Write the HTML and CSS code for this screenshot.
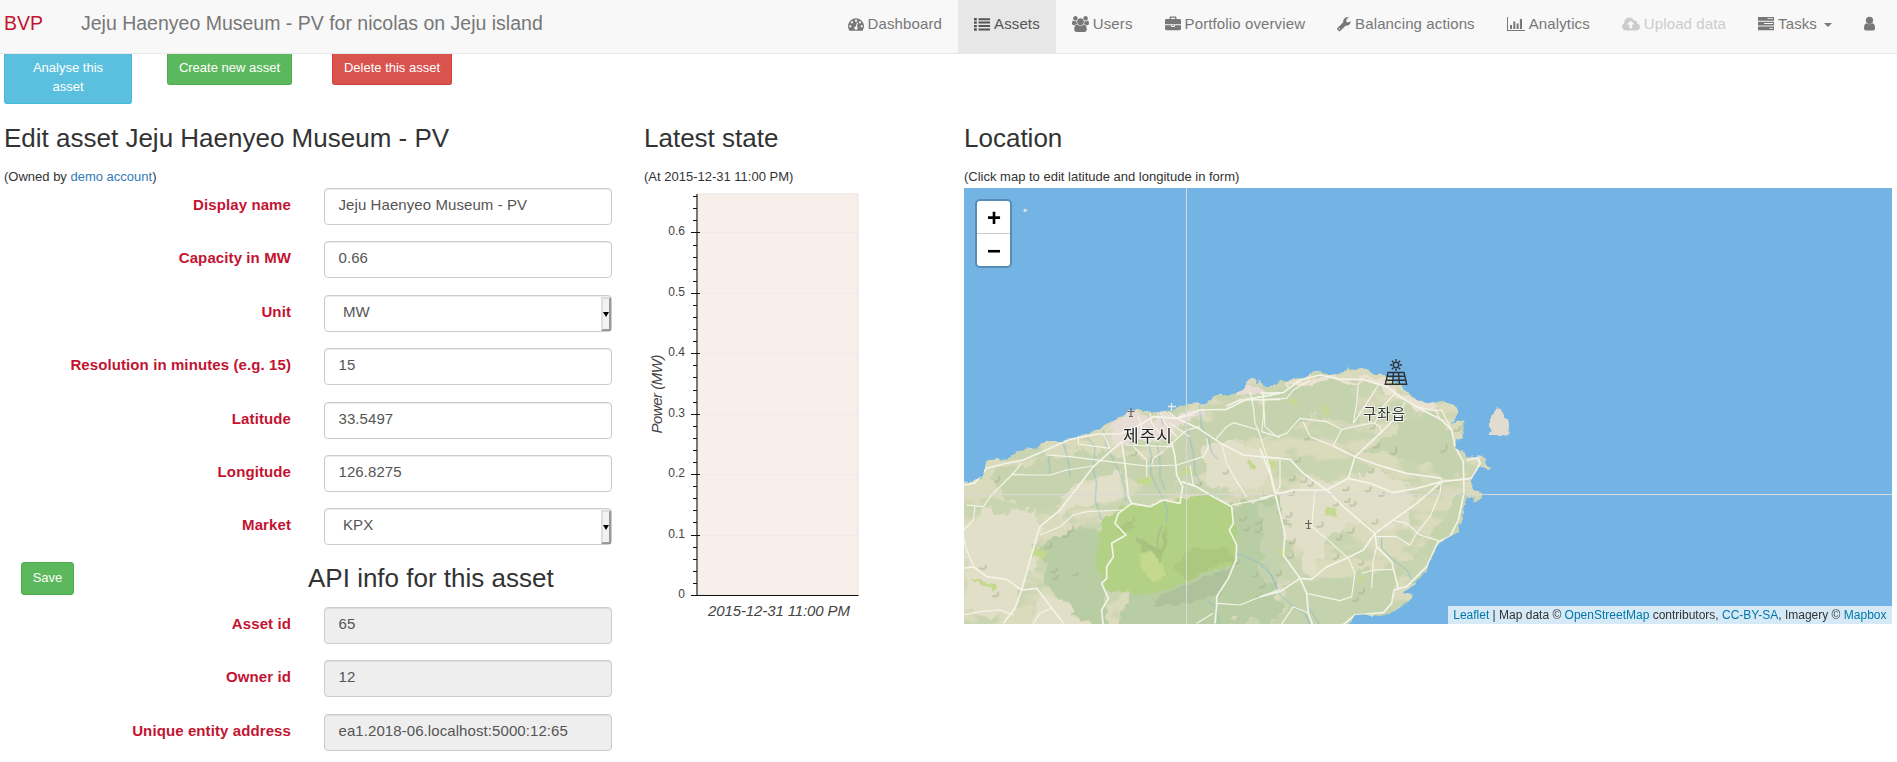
FILE: index.html
```html
<!DOCTYPE html>
<html lang="en">
<head>
<meta charset="utf-8">
<title>Jeju Haenyeo Museum - PV</title>
<link rel="stylesheet" href="styles.css">
</head>
<body>
<header class="navbar">
  <a class="brand">BVP</a>
  <span class="page-title">Jeju Haenyeo Museum - PV for nicolas on Jeju island</span>
  <nav class="menu">
    <a class="item"><svg class="icon" viewBox="0 0 1792 1792"><path d="M384 1152q0-53-37.500-90.500t-90.500-37.500-90.500 37.500-37.500 90.500 37.500 90.500 90.500 37.500 90.500-37.500 37.500-90.500zm192-448q0-53-37.500-90.500t-90.500-37.500-90.500 37.500-37.500 90.500 37.500 90.500 90.500 37.500 90.500-37.500 37.500-90.500zm428 481l101-382q6-26-7.500-48.500t-38.500-29.500-48 6.500-30 39.500l-101 382q-60 5-107 43.500t-63 98.500q-20 77 20 146t117 89 146-20 89-117q16-60-6-117t-72-91zm660-33q0-53-37.500-90.500t-90.500-37.500-90.500 37.500-37.500 90.500 37.500 90.500 90.500 37.500 90.500-37.500 37.500-90.500zm-640-640q0-53-37.500-90.500t-90.500-37.500-90.500 37.500-37.500 90.500 37.500 90.500 90.500 37.500 90.500-37.500 37.500-90.500zm448 192q0-53-37.500-90.500t-90.500-37.500-90.500 37.500-37.500 90.500 37.500 90.500 90.500 37.500 90.500-37.500 37.500-90.500zm320 448q0 261-141 483-19 29-54 29h-1402q-35 0-54-29-141-221-141-483 0-182 71-348t191-286 286-191 348-71 348 71 286 191 191 286 71 348z"/></svg><span>Dashboard</span></a>
    <a class="item active"><svg class="icon" viewBox="0 0 16 16"><path d="M0 2h2.800v2.400H0zM0 5.400h2.800v2.400H0zM0 8.900h2.800v2.400H0zM0 12.300h2.800v2.400H0zM4.500 2.200H16v2H4.500zM4.500 5.600H16v2H4.500zM4.500 9.100H16v2H4.500zM4.500 12.500H16v2H4.500z"/></svg><span>Assets</span></a>
    <a class="item"><svg class="icon icon-users" viewBox="-64 0 1920 1792"><path d="M529 896q-162 5-265 128h-134q-82 0-138-40.500t-56-118.500q0-353 124-353 6 0 43.500 21t97.500 42.500 119 21.500q67 0 133-23-5 37-5 66 0 139 81 256zm1071 637q0 120-73 189.500t-194 69.500h-874q-121 0-194-69.500t-73-189.500q0-53 3.500-103.500t14-109 26.500-108.500 43-97.500 62-81 85.500-53.500 111.500-20q10 0 43 21.500t73 48 107 48 135 21.500 135-21.500 107-48 73-48 43-21.500q61 0 111.500 20t85.500 53.500 62 81 43 97.500 26.500 108.500 14 109 3.500 103.500zm-1024-1277q0 106-75 181t-181 75-181-75-75-181 75-181 181-75 181 75 75 181zm704 384q0 159-112.500 271.500t-271.500 112.500-271.500-112.500-112.500-271.500 112.500-271.500 271.500-112.500 271.500 112.500 112.500 271.500zm576 225q0 78-56 118.500t-138 40.500h-134q-103-123-265-128 81-117 81-256 0-29-5-66 66 23 133 23 59 0 119-21.500t97.500-42.500 43.500-21q124 0 124 353zm-128-609q0 106-75 181t-181 75-181-75-75-181 75-181 181-75 181 75 75 181z"/></svg><span>Users</span></a>
    <a class="item"><svg class="icon" viewBox="0 0 16 16"><path fill-rule="evenodd" d="M4.600 3V1.300Q4.600.4 5.500.4h5q.9 0 .9.900V3h3.200Q16 3 16 4.400v3.800H0V4.400Q0 3 1.400 3zM5.900 3h4.200V1.700H5.900zM0 9.200h6v1q0 .8.800.8h2.400q.8 0 .8-.8v-1h6v3.600q0 1.400-1.400 1.400H1.400Q0 14.200 0 12.800zM7 9.200h2v.9H7z"/></svg><span>Portfolio overview</span></a>
    <a class="item"><svg class="icon icon-wrench" viewBox="0 0 15 16"><path fill-rule="evenodd" d="M.5 12.400 6.700 6.200Q6.200 4 7.700 2.300 9.700.2 12.700 1L10 3.300v2.200l1.800 1L14.600 5q.1 2.500-1.600 3.900-1.500 1.200-3.600.8l-6 5.700q-.8.700-1.600 0L.5 14.200q-.8-.9 0-1.800zM2.500 12.500a.7.700 0 1 0 .1 1.400.7.700 0 0 0-.1-1.400z"/></svg><span>Balancing actions</span></a>
    <a class="item"><svg class="icon icon-chart" viewBox="0 0 18 16"><path d="M0 1h1v13h17v1H0zM3 9h2v4H3zM6.300 5.500h2V13h-2zM9.600 7.500h2V13h-2zM12.900 3H15v10h-2.100z"/></svg><span>Analytics</span></a>
    <a class="item disabled"><svg class="icon icon-cloud" viewBox="0 0 18 16"><path fill-rule="evenodd" d="M4 14.500Q0 14 0 10.500 0 8 2.300 7 2 2 7 1.500q3.500-.1 4.800 3.100Q15 4 15 7.400q3 .6 3 3.700-.2 3-3.500 3.400zM8.700 4.700 4.900 8.500h2.400v3.800h2.900V8.500h2.500z"/></svg><span>Upload data</span></a>
    <a class="item"><svg class="icon" viewBox="0 0 16 16"><path fill-rule="evenodd" d="M0 1h16v3.700H0zM9.500 2.300v.8H15v-.8zM0 5.700h16v3.700H0zM6 7.100v.8h9v-.8zM0 10.500h16v3.800H0zM11.500 12v.8H15V12z"/></svg><span>Tasks</span><i class="caret"></i></a>
    <a class="item"><svg class="icon icon-user" viewBox="0 0 11 16"><circle cx="5.500" cy="4.300" r="3.600"/><path d="M2.500 7.200Q5.500 9.500 8.500 7.200 11 7.600 11 12.500q0 2-2 2H2q-2 0-2-2 0-4.900 2.500-5.300z"/></svg></a>
  </nav>
</header>

<main class="page">
  <section class="col-form">
    <div class="actions">
      <a class="btn info">Analyse this asset</a>
      <a class="btn success">Create new asset</a>
      <a class="btn danger">Delete this asset</a>
    </div>
    <h3 class="heading">Edit asset Jeju Haenyeo Museum - PV</h3>
    <small class="note">(Owned by <a class="link">demo account</a>)</small>
    <form class="form">
      <label class="row"><span class="label">Display name</span><span class="control">Jeju Haenyeo Museum - PV</span></label>
      <label class="row"><span class="label">Capacity in MW</span><span class="control">0.66</span></label>
      <label class="row"><span class="label">Unit</span><span class="control select">MW<i class="arrow"></i></span></label>
      <label class="row"><span class="label">Resolution in minutes (e.g. 15)</span><span class="control">15</span></label>
      <label class="row"><span class="label">Latitude</span><span class="control">33.5497</span></label>
      <label class="row"><span class="label">Longitude</span><span class="control">126.8275</span></label>
      <label class="row"><span class="label">Market</span><span class="control select">KPX<i class="arrow"></i></span></label>
      <div class="save-row"><a class="btn success save">Save</a><h3 class="heading api">API info for this asset</h3></div>
      <label class="row"><span class="label">Asset id</span><span class="control readonly">65</span></label>
      <label class="row"><span class="label">Owner id</span><span class="control readonly">12</span></label>
      <label class="row"><span class="label">Unique entity address</span><span class="control readonly">ea1.2018-06.localhost:5000:12:65</span></label>
    </form>
  </section>

  <section class="col-state">
    <h3 class="heading">Latest state</h3>
    <small class="note">(At 2015-12-31 11:00 PM)</small>
    <svg class="chart" width="230" height="436" viewBox="644 188 230 436">
      <rect x="697.500" y="194" width="160.500" height="401" fill="#f8efeb" stroke="#e9e1df"/>
      <path d="M698 232.500h160M698 293.500h160M698 353.500h160M698 414.500h160M698 474.500h160M698 535.500h160" stroke="#f2eae8"/>
      <path d="M697 194v402" stroke="#777" stroke-width="2"/>
      <path d="M691 232.500h9M691 293.500h9M691 353.500h9M691 414.500h9M691 474.500h9M691 535.500h9M691 595.500h167.500" stroke="#111"/>
      <path d="M693 196.500h4M693 208.500h4M693 220.500h4M693 245.500h4M693 257.500h4M693 269.500h4M693 281.500h4M693 305.500h4M693 317.500h4M693 329.500h4M693 341.500h4M693 365.500h4M693 377.500h4M693 390.500h4M693 402.500h4M693 426.500h4M693 438.500h4M693 450.500h4M693 462.500h4M693 486.500h4M693 498.500h4M693 510.500h4M693 522.500h4M693 547.500h4M693 559.500h4M693 571.500h4M693 583.500h4" stroke="#111"/>
      <g class="tick-labels" text-anchor="end">
        <text x="685" y="235">0.6</text><text x="685" y="296">0.5</text><text x="685" y="356">0.4</text><text x="685" y="417">0.3</text><text x="685" y="477">0.2</text><text x="685" y="538">0.1</text><text x="685" y="598">0</text>
      </g>
      <text class="axis-label" x="708" y="616" textLength="142">2015-12-31 11:00 PM</text>
      <text class="axis-label" transform="translate(662 433.500) rotate(-90)" textLength="79">Power (MW)</text>
    </svg>
  </section>

  <section class="col-map">
    <h3 class="heading">Location</h3>
    <small class="note">(Click map to edit latitude and longitude in form)</small>
    <div class="map">
      <svg class="tiles" viewBox="964 188 928 436">
        <defs>
          <filter id="rough" x="-5%" y="-5%" width="110%" height="110%"><feTurbulence type="fractalNoise" baseFrequency=".12" numOctaves="3" seed="4"/><feDisplacementMap in="SourceGraphic" scale="7" xChannelSelector="R" yChannelSelector="G"/></filter>
          <filter id="terrain" x="-10%" y="-10%" width="120%" height="120%"><feTurbulence type="fractalNoise" baseFrequency=".05" numOctaves="4" seed="9"/><feDisplacementMap in="SourceGraphic" scale="26" xChannelSelector="R" yChannelSelector="G"/><feGaussianBlur stdDeviation=".5"/></filter>
          <filter id="mottle" x="0" y="0" width="100%" height="100%" color-interpolation-filters="sRGB"><feTurbulence type="fractalNoise" baseFrequency=".025 .05" numOctaves="3" seed="21"/><feColorMatrix values="0 0 0 0 .75  0 0 0 0 .82  0 0 0 0 .66  9 0 0 0 -4.200"/></filter>
          <clipPath id="land">
            <path id="west" transform="translate(960 360) scale(.33333)" d="M0 373 12 368 40 364 70 345 78 300 95 300 110 297 140 300 160 285 185 270 215 268 245 255 255 240 275 245 300 248 340 232 375 222 415 210 450 185 490 172 505 150 525 152 560 160 600 155 640 148 680 133 715 130 740 130 765 105 810 105 850 90 865 65 880 52 895 72 910 80V820H0z"/>
            <path id="east" transform="translate(1260 340) scale(.33333)" d="M-8 130 0 122 20 142 45 138 60 120 85 128 130 110 175 95 210 105 255 100 262 85 290 92 310 86 345 105 375 105 420 135 440 155 470 180 500 190 540 183 570 188 595 210 585 230 568 254 590 240 613 245 610 295 590 300 585 325 610 335 620 350 650 355 660 343 670 345 672 370 690 385 680 392 660 375 640 400 635 420 640 450 660 455 665 475 650 487 635 470 620 470 610 500 605 540 595 555 598 575 560 595 535 610 510 660 500 690 480 715 450 740 432 762 460 770 440 790 400 815 360 828 320 822 285 825 262 856H-8z"/>
          </clipPath>
        </defs>
        <rect x="964" y="188" width="928" height="436" fill="#73b4e5"/>
        <g filter="url(#rough)" fill="#dadabd">
          <use href="#west"/><use href="#east"/>
          <path fill="#e2dbd0" transform="translate(1260 340) scale(.33333)" d="M700 215 710 198 722 210 730 225 745 245 750 265 742 292 720 285 690 285 686 245z"/>
          <circle cx="1024.500" cy="211" r="2.200" fill="#dfe3dc"/>
        </g>
        <g clip-path="url(#land)">
          <rect x="964" y="360" width="520" height="264" filter="url(#mottle)" opacity=".6"/>
          <g filter="url(#terrain)">
            <g transform="translate(960 360) scale(.33333)">
              <path fill="#c6d3ae" d="M90 350 200 300 340 285 470 290 600 290 680 200 790 150 920 110V230L820 240 740 320 660 370 560 390 470 350 400 340 300 430 240 470 140 420z"/>
              <path fill="#e2dfc8" d="M10 480 200 440 240 500 220 600 190 700 150 770 20 760zM390 360 470 335 500 390 460 430 360 440 290 480 330 400zM240 700 360 740 420 810 200 820zM740 260 860 250 930 300 920 390 800 390 740 340z"/>
              <path fill="#e8ddd5" d="M440 200 510 155 620 165 690 160 720 140 745 150 660 205 600 235 450 245zM820 100 870 80 930 90 880 110z"/>
              <path fill="#b9cda4" d="M250 570 310 500 440 500 440 700 450 840H420L280 700zM810 430 980 410V560L950 650 960 780 800 790 700 840H450L520 700 830 600z"/>
            </g>
            <g transform="translate(1260 340) scale(.33333)">
              <path fill="#c4d2ad" d="M10 170 130 130 270 130 300 240 180 240 50 280 0 260zM340 320 440 230 540 230 600 330 600 410 530 400 400 350 290 330zM0 490 50 500 90 580 80 700 10 740zM80 760 160 720 290 700 410 690 400 850 40 870z"/>
              <path fill="#e2dfc9" d="M60 470 150 420 290 430 410 430 480 470 440 530 350 560 260 540 200 600 160 700 110 640 80 570zM290 390 380 400 450 440 300 430z"/>
              <path fill="#eae1d1" d="M80 130 180 105 290 120 370 110 430 150 520 200 560 250 470 210 350 130 200 130 90 160z"/>
              <path fill="#c6d4ae" d="M480 640 540 560 620 420 600 560 500 700z"/>
            </g>
          </g>
          <g filter="url(#rough)">
            <path transform="translate(960 360) scale(.33333)" fill="#b3d185" d="M425 480 490 440 560 432 640 420 690 410 750 405 812 435 830 500 828 590 820 620 740 635 650 680 560 705 440 690 410 620z"/>
            <g transform="translate(960 360) scale(.33333)" fill="#c4d98e">
              <path d="M535 350 575 350 570 375 535 370zM220 560 260 580 250 600 215 585zM540 580 590 570 620 650 580 665 545 630zM665 325 700 330 695 350 665 345zM870 300 890 320 880 330 860 310zM30 655 110 675 100 690 50 670z"/>
              <path fill="#a3c077" d="M530 535 570 555 600 570 615 500 625 540 600 610 575 570 545 570z" opacity=".8"/>
              <path fill="#a9c57c" d="M640 620 700 560 760 570 800 560 830 600 740 630 680 665zM470 510 500 480 525 500 500 520z" opacity=".8"/>
              <path fill="#a9bd97" d="M640 690 740 650 820 620 780 700 690 730 580 740 600 705z" opacity=".75"/>
            </g>
            <g transform="translate(1260 340) scale(.33333)" fill="#c5da90"><path d="M85 175 115 178 110 195 85 192zM185 195 215 210 200 235zM200 500 230 505 232 530 195 525zM30 355 52 365 35 400zM55 625 75 630 68 650zM295 710 320 718 300 727z"/></g>
          </g>
          <g transform="translate(960 360) scale(.33333)" class="streams"><path d="M265 285 270 340M310 250 325 300 330 350M380 230 405 260 400 330 410 370 405 420 425 480M430 210 440 260 480 340 495 380 497 425M565 250 575 290 572 340 590 380 610 415 622 450 618 490M590 250 600 300 600 350 615 390M680 200 700 280 705 340 725 375M718 135 725 200 745 230 755 280 775 298M830 580 880 600 920 620 940 660 960 700M740 720 765 740 780 790M620 120 600 160 610 195"/></g>
          <g transform="translate(1260 340) scale(.33333)" class="streams"><path d="M0 675 35 705 55 760 100 800 135 820 150 856M145 800 180 856M365 590 365 625 400 660 440 690 465 735"/></g>
          <g class="hills" transform="translate(960 360) scale(.33333)"><path d="M105 365q15 0 12-14M255 562q20 6 20-12M310 530q18 5 18-14M325 515q16 0 15-15M60 625q18 6 18-8M100 708q16 4 14-10M505 490q18 0 16-14M515 285q14 4 14-8M275 635q16 4 16-8M280 655q14 4 14-8M840 480q18 5 18-10M850 510q16 5 16-8M885 515q18 3 18-12M890 490q16 3 16-10M530 535q30 5 50 40M605 500q-20 40-10 75M340 645q14 4 14-8M790 340q14 4 14-8M710 375q14 4 14-8M890 710q14 4 14-8M880 650q14 0 12-10M820 610q16 6 16-8"/></g>
          <g class="hills" transform="translate(1260 340) scale(.33333)"><path d="M135 298q12 4 12-8M342 322q15 4 14-10M395 342q16 4 14-18M545 335q16 0 14-18M583 272q16 4 16-10M108 364q12 4 12-8M90 420q14 4 14-12M125 425q14 4 14-10M145 437q14 4 14-10M328 397q14 4 12-10M250 450q16 4 16-8M318 453q14 4 14-10M358 467q14 4 14-8M255 485q14 4 14-8M272 496q15 4 14-10M222 496q14 4 12-10M80 530q16 4 14-12M88 464q16 4 14-10M90 609q16 4 14-12M82 653q18 4 18-12M172 560q18 4 16-12M230 598q14 4 14-12M265 578q16 4 16-12M338 550q16 4 14-10M222 657q14 0 12-12M298 673q12 4 12-8M298 760q14 4 14-12M280 783q14 4 14-10M50 705q16 4 12-12M0 742q14 4 14-12M532 445q12 0 10-10M332 265q12 4 12-8"/></g>
          <g class="roads" transform="translate(960 360) scale(.33333)">
            <path class="wide" d="M10 376 45 368 80 325 130 312 190 300 270 265 330 238 415 222 480 222 530 200 580 170 650 175 715 205 780 248 850 285 960 295M10 625 40 620 80 650 140 658 185 690 230 530 240 500 300 450 400 320 485 245M185 690 165 745 130 790M185 690 230 685 310 790M485 245 495 310 505 410 515 430 475 460 465 490 498 525 455 550 460 590 440 620 440 655 425 670 445 715 425 750 430 800M515 430 570 440 610 420 660 430 668 380 650 345 645 290 635 245M665 365 710 380 760 410 815 440 820 490 808 510 830 555 828 600 805 655 770 710 770 735 765 790M650 175 720 150 800 148 860 118 960 100M800 138 840 120 960 118"/>
            <path d="M185 310 155 345 95 405 70 440 20 435M155 343 210 345 270 345 320 330 400 318M260 285 330 290 450 305 560 318 650 315 730 290 745 262 740 235M240 525 300 500 340 465 380 455 490 450M45 440 40 480 10 510M10 530 20 570 40 615M10 765 60 755 120 750 160 765M220 790 240 760 275 745M355 222 355 252 450 265M430 222 450 265M500 255 635 260M535 170 545 200 540 230M570 155 575 190 600 220 630 245M600 155 615 190 650 230M625 155 650 175 700 165M630 190 690 230M520 260 560 300 560 350M610 275 580 295 575 315M690 315 700 378M785 250 800 310 830 365 860 410M815 435 920 415 960 395M870 95 880 140 885 190 895 210 920 290 945 390 960 460M910 100 910 170 905 215 960 232M765 240 800 200 820 188 895 210M620 265 680 210 720 200M770 730 840 735 890 715 960 688M710 790 760 760"/>
          </g>
          <g class="roads" transform="translate(1260 340) scale(.33333)">
            <path class="wide" d="M0 160 70 158 120 120 180 105 240 118 310 118 380 140 420 170 470 200 545 240 575 270 585 320 610 365 612 460 595 540 570 590 535 605 500 680 440 740 402 750 395 790 370 818 285 825 230 870M0 350 90 358 130 400 200 450 250 500 320 560 345 580 350 620 395 665 415 745M0 325 30 400 45 460 75 580 70 645 120 715 140 760 145 820 160 860M200 450 265 415 285 350 350 290 400 240M0 475 60 460 100 450 200 450M220 318 285 350 370 380 440 400 545 415M265 415 330 430 400 458 470 445 545 425 635 415 660 370 650 355 620 360M0 770 60 755 120 715 155 718 200 680 260 655 310 630 345 580 400 540 470 490 545 425"/>
            <path d="M0 180 80 175 100 150 150 120M10 165 15 260 50 290 80 280 120 235 200 245 245 268 340 248 360 260 365 280M295 130 290 190 280 250M355 135 320 190 280 250M405 160 360 210 345 250M245 268 220 318M220 318 150 290 130 245M545 415 540 460 510 530 470 580 450 615 410 590 350 590M395 540 440 550 480 585 535 602M165 450 155 560 210 605 265 655 285 700 275 770 240 782 140 760M60 860 100 800 145 820M350 620 340 660 335 745M305 700 340 690 400 688M60 360 60 440 45 460M435 185 420 220 400 240M470 200 520 212 545 210 575 270"/>
          </g>
        </g>
        <path transform="translate(1260 340) scale(.33333)" fill="none" stroke="#f1eee5" stroke-width="4" d="M610 420 635 413 662 370 655 352 635 356"/>
        <path d="M1186.500 188v436" stroke="#d9d9dc"/><path d="M964 494.500h928" stroke="#d9d9dc"/>
        <g fill="none" stroke="#68645c" stroke-width="1.200"><path id="plane" d="M1131 408v9M1127.500 411.500h7M1129 416.500h4"/><use href="#plane" x="177.500" y="112"/></g>
        <path d="M1171.500 403v8M1168 406.500h8" stroke="#eceae6" stroke-width="1.300"/>
        <g class="place"><text class="city" x="1123" y="442" textLength="49">제주시</text><text class="town" x="1363" y="419" textLength="42">구좌읍</text></g>
        <g fill="none" stroke="#2c2f33" stroke-width="1.400"><circle cx="1396" cy="365" r="2.700"/><path d="M1396 359v2.300M1396 368.700v2.300M1390 365h2.300M1399.700 365h2.300M1391.800 360.800l1.500 1.500M1398.700 367.700l1.500 1.500M1391.800 369.200l1.500-1.500M1398.700 362.300l1.500-1.500M1388 372.500h16l2.700 11.700h-21.400zM1387.500 376.300h17M1386.500 380.300h19M1393.500 372.500l-1 11.700M1398.500 372.500l1 11.700"/></g>
      </svg>
      <div class="zoom"><a>+</a><a>−</a></div>
      <div class="attribution"><a>Leaflet</a> | Map data © <a>OpenStreetMap</a> contributors, <a>CC-BY-SA</a>, Imagery © <a>Mapbox</a></div>
    </div>
  </section>
</main>
</body>
</html>
```
FILE: styles.css
```css
* { box-sizing: border-box; }
body {
  margin: 0;
  height: 762px;
  overflow: hidden;
  background: #fff;
  color: #333;
  font-family: "Liberation Sans", Arial, sans-serif;
  font-size: 15px;
}
.navbar {
  display: flex;
  height: 54px;
  background: #f8f8f8;
  border-bottom: 1px solid #e7e7e7;
  white-space: nowrap;
}
.brand, .page-title { font-size: 19.500px; line-height: 47px; color: #777; }
.brand { width: 81px; padding-left: 4px; color: #c21432; }
.menu { display: flex; margin-left: auto; padding-right: 6px; }
.item {
  display: flex;
  align-items: center;
  gap: 4px;
  height: 53px;
  padding: 0 16px 6px;
  color: #777;
  font-size: 15px;
  letter-spacing: .12px;
}
.item.active { background: #e7e7e7; color: #555; }
.item.disabled { color: #ccc; }
.icon { width: 16px; height: 16px; fill: currentColor; flex: none; }
.icon-users { width: 17px; }
.icon-wrench { width: 14px; }
.icon-chart, .icon-cloud { width: 18px; }
.icon-user { width: 11px; }
.caret {
  margin: 2px 0 0 3px;
  border: 4px solid transparent;
  border-top-color: currentColor;
  border-bottom: 0;
}
.page { display: flex; }
.col-form { width: 644px; padding-left: 4px; }
.col-state { width: 320px; padding-top: 64px; }
.col-map { width: 928px; padding-top: 64px; }
.actions { display: flex; align-items: flex-start; height: 64px; }
.btn {
  display: block;
  padding: 4px 10px 7px;
  border: 1px solid;
  border-top: 0;
  border-radius: 0 0 3px 3px;
  color: #fff;
  font-size: 13px;
  line-height: 19px;
  text-align: center;
}
.info { width: 128px; margin-right: 35px; background: #5bc0de; border-color: #46b8da; }
.success { width: 125px; margin-right: 40px; background: #5cb85c; border-color: #4cae4c; white-space: nowrap; }
.danger { width: 120px; background: #d9534f; border-color: #d43f3a; white-space: nowrap; }
.actions .btn { padding-left: 4px; padding-right: 4px; }
.actions .info { padding-left: 20px; padding-right: 20px; }
.heading {
  height: 49px;
  margin: 0;
  padding-top: 4px;
  font-size: 26px;
  line-height: 32px;
  font-weight: 400;
  white-space: nowrap;
}
.note { display: block; height: 21px; font-size: 13px; line-height: 20px; }
.link { color: #337ab7; }
.form { display: block; }
.row { display: flex; height: 53.400px; }
.label {
  width: 287px;
  color: #c21432;
  font-weight: 700;
  letter-spacing: .1px;
  line-height: 34px;
  text-align: right;
}
.control {
  position: relative;
  width: 288px;
  height: 37px;
  margin-left: 33px;
  padding-left: 13.500px;
  border: 1px solid #ccc;
  border-radius: 4px;
  background: #fff;
  box-shadow: inset 0 1px 1px rgba(0, 0, 0, .075);
  color: #555;
  letter-spacing: .08px;
  line-height: 32px;
}
.readonly { background: #eee; }
.select { padding-left: 18px; }
.arrow {
  position: absolute;
  right: 0;
  top: 1px;
  width: 10px;
  height: 34px;
  border: 2px solid;
  border-color: #ddd #999 #999 #ddd;
  background: #f2f2f2;
}
.arrow::after {
  content: "";
  position: absolute;
  left: 0;
  top: 13px;
  border: 3px solid transparent;
  border-top: 5px solid #000;
  border-bottom: 0;
}
.save-row { display: flex; height: 45.200px; }
.save {
  width: 53px;
  height: 33px;
  margin: 0 234px 0 17px;
  padding: 5px 0;
  border-top: 1px solid #4cae4c;
  border-radius: 3px;
}
.api { padding-top: 0; }
.chart { display: block; }
.tick-labels { font-size: 12px; fill: #444; }
.axis-label { font-size: 15px; font-style: italic; fill: #444; }
.map { position: relative; width: 928px; height: 436px; overflow: hidden; }
.tiles { display: block; width: 928px; height: 436px; }
.streams { fill: none; stroke: #8bbcc6; stroke-width: 3; opacity: .8; }
.hills { fill: none; stroke: #a5b48d; stroke-width: 7; stroke-linecap: round; opacity: .5; }
.roads { fill: none; stroke: #f4f4e9; stroke-width: 3.500; stroke-linejoin: round; }
.roads .wide { stroke-width: 5; }
.place {
  font-family: "Noto Sans CJK KR", sans-serif;
  fill: #333;
  stroke: rgba(255, 255, 255, .75);
  stroke-width: 2px;
  paint-order: stroke;
}
.city { font-size: 17px; fill: #222; }
.town { font-size: 14.500px; }
.zoom {
  position: absolute;
  left: 11px;
  top: 11px;
  width: 37px;
  border: 2px solid rgba(63, 108, 143, .55);
  border-radius: 5px;
  background-clip: padding-box;
}
.zoom a {
  display: block;
  height: 33px;
  padding-left: 1px;
  background: #fff;
  color: #000;
  font-size: 24px;
  font-weight: 700;
  line-height: 33px;
  text-align: center;
}
.zoom a:first-child { border-bottom: 1px solid #ccc; border-radius: 3px 3px 0 0; }
.zoom a:last-child { height: 32px; border-radius: 0 0 3px 3px; }
.attribution {
  position: absolute;
  right: 0;
  bottom: 0;
  height: 18px;
  padding: 0 5.500px;
  background: rgba(255, 255, 255, .7);
  font-size: 12px;
  line-height: 18px;
  white-space: nowrap;
}
.attribution a { color: #0078a8; }
```
